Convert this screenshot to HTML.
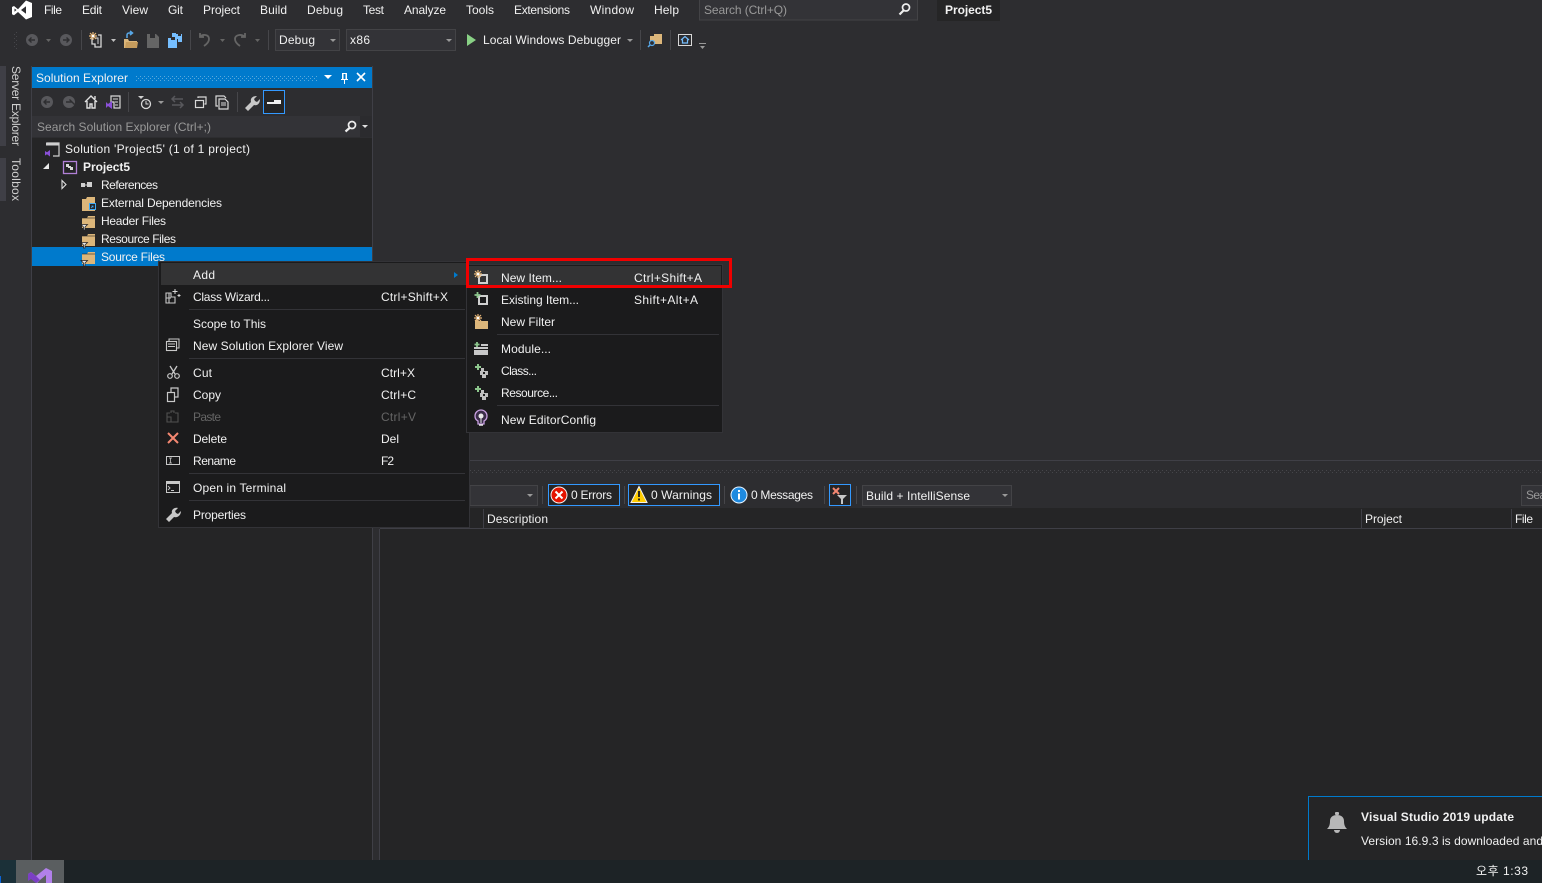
<!DOCTYPE html>
<html><head><meta charset="utf-8"><title>Project5</title>
<style>
html,body{margin:0;padding:0;background:#2d2d30;overflow:hidden}
svg{display:block}
text{font-family:"Liberation Sans","Noto Sans CJK KR",sans-serif;font-size:12px;fill:#f1f1f1}
.g{fill:#999}.d{fill:#656565}.b{font-weight:bold}
</style></head><body>
<svg xmlns="http://www.w3.org/2000/svg" width="1542" height="883" viewBox="0 0 1542 883">
<defs>
<pattern id="dw" width="4" height="4" patternUnits="userSpaceOnUse"><rect width="1" height="1" fill="#5aa9dc"/><rect x="2" y="2" width="1" height="1" fill="#5aa9dc"/></pattern>
<pattern id="dg" width="4" height="4" patternUnits="userSpaceOnUse"><rect width="1" height="1" fill="#46464a"/><rect x="2" y="2" width="1" height="1" fill="#46464a"/></pattern>
<g id="fold2"><path d="M1 3h5l1-2h7v12H1z" fill="#dcb67a"/><path d="M1 3h13" stroke="#252526" stroke-width=".6"/><path d="M0 9.500h6.500l-2.500 2.500v3H2.500v-3z" fill="#e8e8e8" stroke="#252526" stroke-width=".8"/></g>
<g id="gears"><path d="M0 3h6M3 0v6" stroke="#8cc68c" stroke-width="2"/><path d="M6 4h3v3h4v4h-2v3H7v-3H5V7h1z" fill="#c0c0c0"/><rect x="8" y="8" width="2" height="2" fill="#1b1b1c"/></g>
<g id="star"><path d="M0-4v8M-4 0h8M-3-3l6 6M3-3l-6 6" stroke="#e8b778" stroke-width="1.200"/><circle r="1.300" fill="#fff"/></g>
</defs>

<rect width="1542" height="883" fill="#2d2d30"/>

<!-- title bar -->
<path fill-rule="evenodd" d="M26 .500l6 2.500v14l-6 2.500-8-7.500-4 3.200-2-1V7l2-1 4 3.200zM14.500 8.500v3.200l2-1.700zM26 6.200L21 10l5 3.800z" fill="#fff"/>
<text x="44" y="14" textLength="18">File</text>
<text x="82" y="14" textLength="20">Edit</text>
<text x="122" y="14" textLength="26">View</text>
<text x="168" y="14" textLength="15">Git</text>
<text x="203" y="14" textLength="37">Project</text>
<text x="260" y="14" textLength="27">Build</text>
<text x="307" y="14" textLength="36">Debug</text>
<text x="363" y="14" textLength="21">Test</text>
<text x="404" y="14" textLength="42">Analyze</text>
<text x="466" y="14" textLength="28">Tools</text>
<text x="514" y="14" textLength="56">Extensions</text>
<text x="590" y="14" textLength="44">Window</text>
<text x="654" y="14" textLength="25">Help</text>
<rect x="699.500" y="-1" width="218" height="21" fill="#333337" stroke="#434346"/>
<text class="g" x="704" y="14" textLength="83">Search (Ctrl+Q)</text>
<circle cx="906" cy="7.500" r="3.500" fill="none" stroke="#eee" stroke-width="1.700"/><path d="M903.500 10.500l-4 4" stroke="#eee" stroke-width="2.200"/>
<rect x="937" y="0" width="63" height="21" fill="#252526"/>
<text class="b" x="945" y="14" textLength="47">Project5</text>

<!-- main toolbar -->
<rect x="13" y="32" width="5" height="18" fill="url(#dg)"/>
<circle cx="32" cy="40" r="6" fill="#58585c"/><path d="M35 40h-6m2.500-2.500L29 40l2.500 2.500" stroke="#2d2d30" stroke-width="1.400" fill="none"/>
<path d="M46 39h5l-2.500 3z" fill="#656565"/>
<circle cx="66" cy="40" r="6" fill="#58585c"/><path d="M63 40h6m-2.500-2.500L69 40l-2.500 2.500" stroke="#2d2d30" stroke-width="1.400" fill="none"/>
<rect x="81" y="30" width="1" height="20" fill="#46464a"/>
<path d="M98 35h3v12h-6v-3h-3v-6" fill="none" stroke="#d8d8d8" stroke-width="1.300"/><path d="M95 38h3v6" fill="none" stroke="#d8d8d8" stroke-width="1"/><use href="#star" x="93" y="36"/>
<path d="M111 39h5l-2.500 3z" fill="#c0c0c0"/>
<path d="M124 39h4l1 2h8v7h-13z" fill="#dcb67a"/><path d="M125 48l1-6h12l-1 6z" fill="#c69c5d"/><path d="M127 38v-3a2 2 0 0 1 2-2h3m-2-2l2.500 2-2.500 2" fill="none" stroke="#58a8e8" stroke-width="1.500"/>
<path d="M147 34h9l3 3v11h-12z" fill="#656565"/><rect x="150" y="34" width="5" height="4" fill="#2d2d30"/>
<path d="M168 38h3v2h4v-2h2v10h-9z" fill="#75beff"/><path d="M175 34h3v2h3v-2h1v8h-4v-3h-3z" fill="#75beff"/><rect x="172" y="33" width="4" height="4" fill="#75beff"/>
<rect x="190" y="30" width="1" height="20" fill="#46464a"/>
<path d="M200 33v4h4m-4 0c2-3 9-3 9 2 0 3-2 5-5 7" fill="none" stroke="#656565" stroke-width="1.800"/>
<path d="M220 39h5l-2.500 3z" fill="#656565"/>
<path d="M245 33v4h-4m4 0c-2-3-10-3-10 2 0 3 2 5 5 7" fill="none" stroke="#656565" stroke-width="1.800"/>
<path d="M255 39h5l-2.500 3z" fill="#656565"/>
<rect x="268" y="30" width="1" height="20" fill="#46464a"/>
<rect x="275.500" y="29.500" width="64" height="21" fill="#333337" stroke="#434346"/>
<text x="279" y="44" textLength="36">Debug</text><path d="M330 39h6l-3 3z" fill="#999"/>
<rect x="346.500" y="29.500" width="109" height="21" fill="#333337" stroke="#434346"/>
<text x="350" y="44" textLength="20">x86</text><path d="M446 39h6l-3 3z" fill="#999"/>
<path d="M467 34l9 6-9 6z" fill="#89d185"/>
<text x="483" y="44" textLength="138">Local Windows Debugger</text>
<path d="M627 39h6l-3 3z" fill="#999"/>
<rect x="640" y="30" width="1" height="20" fill="#46464a"/>
<path d="M650 36h4v-2h8v10h-12z" fill="#dcb67a"/><circle cx="652" cy="43" r="2.500" fill="#2d2d30" stroke="#58a8e8" stroke-width="1.200"/><path d="M650 45l-2 2" stroke="#58a8e8" stroke-width="1.500"/>
<rect x="670" y="30" width="1" height="20" fill="#46464a"/>
<rect x="678.500" y="34.500" width="13" height="11" fill="none" stroke="#d8d8d8"/><path d="M681 40l4-3.500 4 3.500m-6.500-.5V43h5v-3.500" fill="none" stroke="#75beff" stroke-width="1.200"/>
<path d="M699 43h7v1h-7zM700 46h5l-2.500 3z" fill="#999"/>

<!-- left strip -->
<rect x="0" y="66" width="6" height="80" fill="#3f3f46"/>
<rect x="0" y="158" width="6" height="43" fill="#3f3f46"/>
<text style="fill:#d0d0d0" transform="translate(12 66) rotate(90)" textLength="80">Server Explorer</text>
<text style="fill:#d0d0d0" transform="translate(12 158) rotate(90)" textLength="43">Toolbox</text>
<rect x="31" y="66" width="1" height="794" fill="#3f3f46"/>

<!-- solution explorer -->
<rect x="32" y="138" width="340" height="722" fill="#252526"/>
<rect x="372" y="66" width="1" height="794" fill="#3f3f46"/>
<rect x="32" y="67" width="340" height="21" fill="#007acc"/>
<text x="36" y="82" textLength="92">Solution Explorer</text>
<rect x="136" y="75" width="182" height="6" fill="url(#dw)"/>
<path d="M324 75h8l-4 4z" fill="#fff"/>
<path d="M342 73h5v6h1v1h-3v4h-1v-4h-3v-1h1z" fill="#fff"/><rect x="343.500" y="74" width="2" height="5" fill="#007acc"/>
<path d="M357 73l8 8m0-8l-8 8" stroke="#fff" stroke-width="1.600"/>
<rect x="32" y="88" width="340" height="28" fill="#2d2d30"/>
<circle cx="47" cy="102" r="6" fill="#58585c"/><path d="M50 102h-6m2.500-2.500L44 102l2.500 2.500" stroke="#2d2d30" stroke-width="1.400" fill="none"/>
<circle cx="69" cy="102" r="6" fill="#58585c"/><path d="M66 102h6m-2.500-2.500L72 102l2.500 2.500" stroke="#2d2d30" stroke-width="1.400" fill="none"/>
<path d="M85 102l6-6 6 6m-10-1v7h3v-4h2v4h3v-7M95 96v3" fill="none" stroke="#e0e0e0" stroke-width="1.400"/>
<path d="M111 96h9v12h-6v-6h-3z" fill="none" stroke="#d8d8d8" stroke-width="1.200"/><path d="M113 99h5m-3 3h3m-3 3h3" stroke="#d8d8d8"/><path d="M106 102l2 2 4-3v8l-4-3-2 2z" fill="#8a50d8"/>
<rect x="128" y="92" width="1" height="20" fill="#46464a"/>
<circle cx="146" cy="104" r="4.500" fill="none" stroke="#d8d8d8" stroke-width="1.300"/><path d="M146 101v3h2.500" stroke="#d8d8d8" fill="none"/><path d="M138 96h6l-3 3z" fill="#d0d0d0"/>
<path d="M158 101h6l-3 3z" fill="#999"/>
<path d="M172 99h11m-8-3l-3 3 3 3M183 105h-11m8-3l3 3-3 3" fill="none" stroke="#58585c" stroke-width="1.500"/>
<rect x="195.500" y="100.500" width="8" height="7" fill="none" stroke="#d8d8d8" stroke-width="1.200"/><path d="M198 98v-1h8v7h-1.500" fill="none" stroke="#d8d8d8" stroke-width="1.200"/>
<path d="M218 106h-2V96h8l2 2" fill="none" stroke="#d8d8d8" stroke-width="1.200"/><path d="M219 99h6l3 3v7h-9z" fill="none" stroke="#d8d8d8" stroke-width="1.200"/><path d="M221 103h5m-5 2h5" stroke="#d8d8d8"/>
<rect x="237" y="92" width="1" height="20" fill="#46464a"/>
<path d="M245 108l6-6c-1-4 2-6 6-6l-3 3 1 2 2 1 3-3c0 4-2 7-6 6l-6 6z" fill="#c8c8c8"/>
<rect x="263.500" y="90.500" width="21" height="23" fill="#252526" stroke="#3399ff"/>
<path d="M267 102h7v-2h7v4h-14z" fill="#f1f1f1"/>
<rect x="32" y="116" width="340" height="21" fill="#333337"/>
<rect x="360" y="116" width="12" height="21" fill="#2b2b2e"/>
<text class="g" x="37" y="131" textLength="174">Search Solution Explorer (Ctrl+;)</text>
<circle cx="352" cy="125" r="3.500" fill="none" stroke="#eee" stroke-width="1.700"/><path d="M349.500 128l-4 3.500" stroke="#eee" stroke-width="2.200"/>
<path d="M362 125h6l-3 3z" fill="#e0e0e0"/>

<!-- tree -->
<rect x="32" y="247" width="340" height="19" fill="#007acc"/>
<path d="M47 143h12v13h-6" fill="none" stroke="#d0d0d0" stroke-width="1.200"/><rect x="46" y="142.500" width="13" height="3" fill="#d0d0d0"/><path d="M45 151l2 1.200 3-2.200v6.500l-3-2.200-2 1.200z" fill="#8a50d8"/>
<text x="65" y="153" textLength="185">Solution 'Project5' (1 of 1 project)</text>
<path d="M49 163v6h-6z" fill="#e8e8e8"/>
<rect x="63.500" y="161.500" width="13" height="12" fill="none" stroke="#b180d7" stroke-width="1.300"/><path d="M66 164h3v2h2v1h2v3h-3v-2h-2v-1h-2z" fill="#d8d8d8"/>
<text class="b" x="83" y="171" textLength="47">Project5</text>
<path d="M62 180.500l4 4-4 4z" fill="none" stroke="#e0e0e0" stroke-width="1.100"/>
<path d="M81 183h4v4h-4zM87 182h5v5h-5z" fill="#d0d0d0"/><rect x="85" y="184.500" width="2" height="1" fill="#d0d0d0"/>
<text x="101" y="189" textLength="57">References</text>
<path d="M82 199h4l1-2h8v14H82z" fill="#dcb67a"/><rect x="89.500" y="203.500" width="6" height="6" fill="#252526" stroke="#3fa9f5"/><path d="M91 208l2-2m-1.500 0H93v1.500" stroke="#3fa9f5" fill="none" stroke-width=".8"/>
<text x="101" y="207" textLength="121">External Dependencies</text>
<use href="#fold2" x="81" y="215"/>
<text x="101" y="225" textLength="65">Header Files</text>
<use href="#fold2" x="81" y="233"/>
<text x="101" y="243" textLength="75">Resource Files</text>
<use href="#fold2" x="81" y="251"/>
<text x="101" y="261" textLength="64">Source Files</text>

<!-- right editor area -->
<rect x="379" y="529" width="1" height="331" fill="#3f3f46"/>
<rect x="380" y="529" width="1162" height="331" fill="#252526"/>
<rect x="373" y="460" width="1169" height="1" fill="#3f3f46"/>
<rect x="469" y="469" width="1073" height="5" fill="url(#dg)"/>
<rect x="380" y="508" width="1162" height="20" fill="#252526"/>
<rect x="380" y="528" width="1162" height="1" fill="#3f3f46"/>
<rect x="470" y="485.500" width="67.500" height="20" fill="#333337" stroke="#434346"/>
<path d="M527 494h6l-3 3z" fill="#999"/>
<rect x="542" y="486" width="1" height="18" fill="#46464a"/>
<rect x="548.500" y="484.500" width="71" height="21" fill="#252526" stroke="#3399ff"/>
<circle cx="559" cy="495" r="8" fill="#e51400" stroke="#f1f1f1" stroke-width="1"/><path d="M555.500 491.500l7 7m0-7l-7 7" stroke="#fff" stroke-width="2"/>
<text x="571" y="499" textLength="41">0 Errors</text>
<rect x="624" y="486" width="1" height="18" fill="#46464a"/>
<rect x="628.500" y="484.500" width="91" height="21" fill="#252526" stroke="#3399ff"/>
<path d="M639 486.500l8 16h-16z" fill="#ffcc00" stroke="#f1f1f1" stroke-width="1"/><path d="M639 491v6m0 1.500v2" stroke="#1b1b1c" stroke-width="1.800"/>
<text x="651" y="499" textLength="61">0 Warnings</text>
<rect x="724" y="486" width="1" height="18" fill="#46464a"/>
<circle cx="739" cy="495" r="8" fill="#1e8ae0" stroke="#e8f4ff" stroke-width="1"/><path d="M739 490v2m0 1.500v6" stroke="#fff" stroke-width="2"/>
<text x="751" y="499" textLength="62">0 Messages</text>
<rect x="824" y="486" width="1" height="18" fill="#46464a"/>
<rect x="829.500" y="484.500" width="21" height="21" fill="#252526" stroke="#3399ff"/>
<path d="M833 488l6 6m0-6l-6 6" stroke="#f48771" stroke-width="2"/><path d="M837 495h10l-4 4v5h-2v-5z" fill="#c8c8c8"/>
<rect x="856" y="486" width="1" height="18" fill="#46464a"/>
<rect x="862.500" y="485.500" width="149" height="20" fill="#333337" stroke="#434346"/>
<text x="866" y="500" textLength="104">Build + IntelliSense</text>
<path d="M1002 494h6l-3 3z" fill="#999"/>
<rect x="1521.500" y="485.500" width="30" height="20" fill="#333337" stroke="#434346"/>
<text class="g" x="1526" y="499" textLength="20">Sea</text>
<rect x="483" y="509" width="1" height="19" fill="#3f3f46"/>
<text x="487" y="523" textLength="61">Description</text>
<rect x="1361" y="509" width="1" height="19" fill="#3f3f46"/>
<text x="1365" y="523" textLength="37">Project</text>
<rect x="1511" y="509" width="1" height="19" fill="#3f3f46"/>
<text x="1515" y="523" textLength="18">File</text>

<!-- context menu -->
<rect x="158.500" y="261.500" width="311" height="266" fill="#1b1b1c" stroke="#333337"/>
<rect x="161" y="263" width="307" height="22" fill="#333334"/>
<text x="193" y="279" textLength="22">Add</text>
<path d="M454 272l4 3-4 3z" fill="#007acc"/>
<path d="M166 293h5v4h4v6h-9zM166 298h5m-2-5v10" fill="none" stroke="#c8c8c8" stroke-width="1.100"/><path d="M175 289v5m-2.500-2.500h5M179 294v3m-1.500-1.500h3" stroke="#d8d8d8"/>
<text x="193" y="301" textLength="77">Class Wizard...</text><text x="381" y="301" textLength="67">Ctrl+Shift+X</text>
<rect x="189" y="309" width="276" height="1" fill="#333337"/>
<text x="193" y="328" textLength="73">Scope to This</text>
<path d="M169 341v-2h10v9h-2" fill="none" stroke="#c8c8c8"/><rect x="166.500" y="341.500" width="10" height="9" fill="#1b1b1c" stroke="#c8c8c8" stroke-width="1.100"/><path d="M168 344h7m-7 2.500h7" stroke="#c8c8c8"/>
<text x="193" y="350" textLength="150">New Solution Explorer View</text>
<rect x="189" y="358" width="276" height="1" fill="#333337"/>
<path d="M170 366l5 8m2-8l-5 8" stroke="#c8c8c8" stroke-width="1.300"/><circle cx="170" cy="376" r="2.300" fill="none" stroke="#c8c8c8" stroke-width="1.200"/><circle cx="177" cy="376" r="2.300" fill="none" stroke="#c8c8c8" stroke-width="1.200"/>
<text x="193" y="377" textLength="19">Cut</text><text x="381" y="377" textLength="34">Ctrl+X</text>
<rect x="167.500" y="392.500" width="7" height="9" fill="none" stroke="#c8c8c8" stroke-width="1.200"/><path d="M171 392v-4h7v9h-3" fill="none" stroke="#c8c8c8" stroke-width="1.200"/>
<text x="193" y="399" textLength="28">Copy</text><text x="381" y="399" textLength="35">Ctrl+C</text>
<path d="M170 413h-3v9h11v-9h-3m-4 0v-2h3v2M171 422v-5h-4" fill="none" stroke="#505050" stroke-width="1.100"/>
<text class="d" x="193" y="421" textLength="28">Paste</text><text class="d" x="381" y="421" textLength="35">Ctrl+V</text>
<path d="M168 433l10 10m0-10l-10 10" stroke="#f48771" stroke-width="2"/>
<text x="193" y="443" textLength="34">Delete</text><text x="381" y="443" textLength="18">Del</text>
<rect x="166.500" y="456.500" width="13" height="8" fill="none" stroke="#c8c8c8"/><path d="M169 458h3m-3 5h3m-1.500-5v5" stroke="#c8c8c8" stroke-width=".8"/>
<text x="193" y="465" textLength="43">Rename</text><text x="381" y="465" textLength="13">F2</text>
<rect x="189" y="473" width="276" height="1" fill="#333337"/>
<rect x="166.500" y="481.500" width="13" height="11" fill="none" stroke="#c8c8c8"/><rect x="167" y="482" width="12" height="2" fill="#c8c8c8"/><path d="M168 486l2 2-2 2m3 .5h3" fill="none" stroke="#c8c8c8" stroke-width=".9"/>
<text x="193" y="492" textLength="93">Open in Terminal</text>
<rect x="189" y="500" width="276" height="1" fill="#333337"/>
<path d="M166 519l6-6c-1-3 2-6 6-5l-3 3 1 2 2 1 3-3c0 4-3 7-7 6l-5 5z" fill="#c8c8c8"/>
<text x="193" y="519" textLength="53">Properties</text>

<!-- submenu -->
<rect x="466.500" y="264.500" width="256" height="168" fill="#1b1b1c" stroke="#333337"/>
<rect x="468" y="266" width="253" height="22" fill="#333334"/>
<rect x="479" y="275" width="8" height="8" fill="none" stroke="#d0d0d0" stroke-width="2"/>
<use href="#star" x="478" y="274"/>
<text x="501" y="282" textLength="61">New Item...</text><text x="634" y="282" textLength="68">Ctrl+Shift+A</text>
<rect x="479" y="296" width="8" height="8" fill="none" stroke="#d0d0d0" stroke-width="2"/>
<path d="M477.500 292v6m-3-3h6" stroke="#8cc68c" stroke-width="1.800"/>
<text x="501" y="304" textLength="78">Existing Item...</text><text x="634" y="304" textLength="64">Shift+Alt+A</text>
<path d="M475 320h3l1 1h9v8h-13z" fill="#dcb67a"/><use href="#star" x="478" y="318"/>
<text x="501" y="326" textLength="54">New Filter</text>
<rect x="497" y="334" width="222" height="1" fill="#333337"/>
<path d="M474 347h14v8h-14z" fill="#c8c8c8"/><rect x="474" y="349" width="14" height="1" fill="#1b1b1c"/><path d="M477 342v5m-2.500-2.500h5" stroke="#8cc68c" stroke-width="1.800"/><path d="M481 344h7v2h-7z" fill="#c8c8c8"/>
<text x="501" y="353" textLength="50">Module...</text>
<use href="#gears" x="475" y="364"/>
<text x="501" y="375" textLength="36">Class...</text>
<use href="#gears" x="475" y="386"/>
<text x="501" y="397" textLength="57">Resource...</text>
<rect x="497" y="405" width="222" height="1" fill="#333337"/>
<path d="M478 421c-2-1-3-3-3-5a6 6 0 0 1 12 0c0 2-1 4-3 5v3h-6z" fill="#3a2c48" stroke="#c8a0e0" stroke-width="1.300"/><path d="M479 425h4" stroke="#e8e8e8" stroke-width="1.500"/><circle cx="481" cy="416" r="2.500" fill="#e8e8e8"/><path d="M481 418v5" stroke="#e8e8e8"/>
<text x="501" y="424" textLength="95">New EditorConfig</text>

<!-- red highlight -->
<rect x="467.500" y="259.500" width="263" height="27" fill="none" stroke="#f00000" stroke-width="3"/>

<!-- notification -->
<rect x="1308.500" y="796.500" width="260" height="70" fill="#252526" stroke="#007acc"/>
<path d="M1327 829c2-2 3-4 3-8 0-4 3-6 7-6s7 2 7 6c0 4 1 6 3 8z" fill="#b8b8b8"/><path d="M1334 830a3 3 0 0 0 6 0z" fill="#b8b8b8"/><rect x="1335" y="812" width="4" height="3" rx="1" fill="#b8b8b8"/>
<text class="b" x="1361" y="821" textLength="153">Visual Studio 2019 update</text>
<text x="1361" y="845" textLength="182">Version 16.9.3 is downloaded and</text>

<!-- taskbar -->
<rect x="0" y="860" width="1542" height="23" fill="#1d2326"/>
<rect x="0" y="860" width="16" height="23" fill="#1b3038"/>
<rect x="0" y="876" width="1" height="7" fill="#0a64d8"/>
<rect x="16" y="860" width="48" height="23" fill="#5a5e60"/>
<path d="M28 874l3-2 5 4 10-8 6 3v12h-6v-8l-6 5-3 3-6-6-3 2z" fill="#b180ea"/><path d="M28 874l3-2 5 4 4 4-4 3-5-4-3 2z" fill="#7b3fc4"/>
<text x="1476" y="875" textLength="52">오후 1:33</text>
</svg>
</body></html>
